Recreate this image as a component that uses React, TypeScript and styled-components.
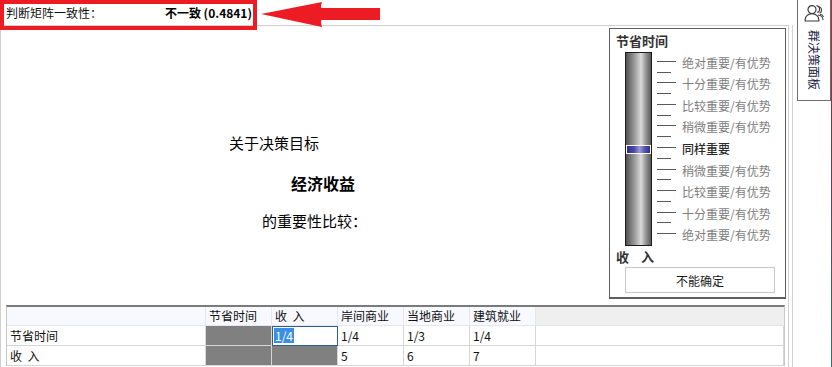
import React from "react";
import styled, { createGlobalStyle } from "styled-components";

const GlobalStyle = createGlobalStyle`
  html, body {
    margin: 0;
    padding: 0;
    background: #ffffff;
  }
  body {
    width: 832px;
    height: 367px;
    overflow: hidden;
    font-family: "Noto Sans CJK SC", "Noto Sans", sans-serif;
    color: #000;
  }
  * {
    box-sizing: border-box;
  }
`;

const scaleLabels = [
  "绝对重要/有优势",
  "十分重要/有优势",
  "比较重要/有优势",
  "稍微重要/有优势",
  "同样重要",
  "稍微重要/有优势",
  "比较重要/有优势",
  "十分重要/有优势",
  "绝对重要/有优势",
];

const columns = ["节省时间", "收  入", "岸间商业", "当地商业", "建筑就业"];

type Cell = { value?: string; blocked?: boolean; editing?: boolean };

const rows: { name: string; cells: Cell[] }[] = [
  {
    name: "节省时间",
    cells: [{ blocked: true }, { value: "1/4", editing: true }, { value: "1/4" }, { value: "1/3" }, { value: "1/4" }],
  },
  {
    name: "收  入",
    cells: [{ blocked: true }, { blocked: true }, { value: "5" }, { value: "6" }, { value: "7" }],
  },
];

const App = () => {
  return (
    <>
      <GlobalStyle />
      <Window>
        <LeftPane>
          <TopBar>
            <Status>
              <StatusLabel>判断矩阵一致性：</StatusLabel>
              <StatusValue>不一致 (0.4841)</StatusValue>
            </Status>
            <Highlight />
            <Arrow width="124" height="30" viewBox="0 0 124 30">
              <path d="M3 14 L64 2 Q62 8 64 8 L122 8 L122 20 L64 20 Q62 20 64 27 Z" fill="#ed1c24" />
            </Arrow>
          </TopBar>
          <Main>
            <Upper>
              <Prompt>
                <PromptLine $indent={228}>关于决策目标</PromptLine>
                <PromptLine $indent={290} $bold $gap={20}>
                  经济收益
                </PromptLine>
                <PromptLine $indent={261} $gap={18}>
                  的重要性比较：
                </PromptLine>
              </Prompt>
              <SliderPanel>
                <PanelTitle>节省时间</PanelTitle>
                <SliderRow>
                  <Track>
                    <Thumb style={{ top: 92 }} />
                  </Track>
                  <Scale>
                    {scaleLabels.map((label, i) => (
                      <ScaleRow key={i} $last={i === scaleLabels.length - 1}>
                        <Tick />
                        <ScaleLabel $active={i === 4}>{label}</ScaleLabel>
                      </ScaleRow>
                    ))}
                  </Scale>
                </SliderRow>
                <PanelFooter>收 入</PanelFooter>
                <UndecidedButton>不能确定</UndecidedButton>
              </SliderPanel>
            </Upper>
            <Grid>
              <HeaderCell />
              {columns.map((c) => (
                <HeaderCell key={c}>{c}</HeaderCell>
              ))}
              <HeaderFiller />
              {rows.map((r) => (
                <React.Fragment key={r.name}>
                  <DataCell>{r.name}</DataCell>
                  {r.cells.map((cell, i) =>
                    cell.editing ? (
                      <EditCell key={i}>
                        <Selected>{cell.value}</Selected>
                      </EditCell>
                    ) : (
                      <DataCell key={i} $blocked={cell.blocked}>
                        {cell.value}
                      </DataCell>
                    )
                  )}
                  <DataCell />
                </React.Fragment>
              ))}
            </Grid>
          </Main>
        </LeftPane>
        <Splitter />
        <SidePane>
          <SideTab>
            <GroupIcon width="20" height="18" viewBox="0 0 20 18">
              <path d="M12.5 1.6 a3.6 3.6 0 0 1 0.6 7" fill="none" stroke="#3a3a3a" strokeWidth="1.1" />
              <path d="M15 2.8 a3.4 3.4 0 0 1 0.6 6.4" fill="none" stroke="#3a3a3a" strokeWidth="1.1" />
              <path d="M14 11 a5.5 5 0 0 1 5 5" fill="none" stroke="#3a3a3a" strokeWidth="1.1" />
              <path d="M16 10 a5 5 0 0 1 3.5 3" fill="none" stroke="#3a3a3a" strokeWidth="1.1" />
              <circle cx="8" cy="5.6" r="4" fill="#fff" stroke="#3a3a3a" strokeWidth="1.2" />
              <path d="M1.2 17 v-1.5 a6.8 5.8 0 0 1 13.6 0 v1.5 z" fill="#fff" stroke="#3a3a3a" strokeWidth="1.2" />
            </GroupIcon>
            <TabText>群决策面板</TabText>
          </SideTab>
        </SidePane>
        <WindowEdge />
      </Window>
    </>
  );
};

const Window = styled.div`
  display: flex;
  width: 832px;
  height: 367px;
  overflow: hidden;
`;

const LeftPane = styled.div`
  width: 788px;
  display: flex;
  flex-direction: column;
`;

const TopBar = styled.div`
  position: relative;
  height: 25px;
  display: flex;
  align-items: center;
  padding-left: 6px;
`;

const Status = styled.div`
  width: 246px;
  display: flex;
  justify-content: space-between;
  align-items: center;
  font-size: 12px;
  line-height: 16px;
  margin-top: 1px;
`;

const StatusLabel = styled.span`
  color: #111;
`;

const StatusValue = styled.span`
  font-weight: 700;
  color: #000;
`;

const Highlight = styled.div`
  position: absolute;
  left: 0;
  top: 0;
  width: 257px;
  height: 30px;
  border: 4px solid #ed1c24;
  pointer-events: none;
  z-index: 2;
`;

const Arrow = styled.svg`
  position: absolute;
  left: 258px;
  top: 0;
  z-index: 2;
`;

const Main = styled.div`
  flex: 1;
  display: flex;
  flex-direction: column;
  border-top: 1px solid #cfcfcf;
  border-left: 1px solid #cfcfcf;
`;

const Upper = styled.div`
  height: 279px;
  display: flex;
`;

const Prompt = styled.div`
  flex: 1;
  display: flex;
  flex-direction: column;
  padding-top: 107px;
`;

const PromptLine = styled.div<{ $indent: number; $bold?: boolean; $gap?: number }>`
  padding-left: ${(p) => p.$indent}px;
  margin-top: ${(p) => p.$gap ?? 0}px;
  font-size: ${(p) => (p.$bold ? 16 : 15)}px;
  font-weight: ${(p) => (p.$bold ? 700 : 400)};
  line-height: 20px;
  color: #000;
  white-space: nowrap;
`;

const SliderPanel = styled.div`
  width: 177px;
  height: 271px;
  margin: 2px 2px 0 0;
  border: 1px solid #5f5f5f;
  border-bottom-width: 2px;
  padding: 4px 0 0 6px;
  display: flex;
  flex-direction: column;
`;

const PanelTitle = styled.div`
  font-size: 13px;
  font-weight: 700;
  line-height: 16px;
  color: #333;
`;

const SliderRow = styled.div`
  display: flex;
  margin-top: 3px;
`;

const Track = styled.div`
  position: relative;
  width: 27px;
  height: 194px;
  margin-left: 9px;
  border: 1px solid #1a1a1a;
  background: linear-gradient(
    to right,
    #505050 0%,
    #7c7c7c 20%,
    #b4b4b4 45%,
    #dcdcdc 60%,
    #9a9a9a 78%,
    #5a5a5a 100%
  );
`;

const Thumb = styled.div`
  position: absolute;
  left: 0;
  width: 25px;
  height: 9px;
  border: 1px solid #ffffff;
  background: linear-gradient(
    to right,
    #2c2c86 0%,
    #4848a8 30%,
    #9a9ad6 55%,
    #5a5ab4 75%,
    #2c2c86 100%
  );
`;

const Scale = styled.div`
  margin-left: 5px;
  height: 194px;
  display: grid;
  grid-template-rows: repeat(9, 1fr);
`;

const ScaleRow = styled.div<{ $last?: boolean }>`
  position: relative;
  display: flex;
  align-items: center;

  &::after {
    content: "";
    display: ${(p) => (p.$last ? "none" : "block")};
    position: absolute;
    left: 0;
    bottom: 1px;
    width: 14px;
    height: 1px;
    background: #5a5a5a;
  }
`;

const Tick = styled.span`
  width: 19px;
  height: 1px;
  background: #5a5a5a;
  margin-top: -3px;
`;

const ScaleLabel = styled.span<{ $active?: boolean }>`
  margin-left: 6px;
  font-size: 12px;
  line-height: 16px;
  white-space: nowrap;
  color: ${(p) => (p.$active ? "#2b2b2b" : "#7e7e7e")};
  font-weight: ${(p) => (p.$active ? 500 : 400)};
`;

const PanelFooter = styled.div`
  margin-top: 3px;
  font-size: 13px;
  font-weight: 700;
  line-height: 16px;
  color: #333;
  word-spacing: 9px;
`;

const UndecidedButton = styled.button`
  margin: 2px 0 0 9px;
  width: 150px;
  height: 26px;
  border: 1px solid #c6c6c6;
  background: #ffffff;
  font-family: inherit;
  font-size: 12px;
  color: #1a1a1a;
  padding: 0;
`;

const Grid = styled.div`
  margin-left: 5px;
  width: 779px;
  display: grid;
  grid-template-columns: 199px repeat(5, 66px) 1fr;
  grid-template-rows: 19px 20px 20px;
  border-top: 2px solid #7b7b7b;
  border-left: 1px solid #c8c8c8;
  border-right: 1px solid #c8c8c8;
  font-size: 12px;
`;

const HeaderCell = styled.div`
  background: #f8f9ff;
  border-right: 1px solid #e4e7f2;
  border-bottom: 1px solid #e4e7f2;
  padding-left: 3px;
  line-height: 18px;
  white-space: pre;
  color: #111;
`;

const HeaderFiller = styled.div`
  background: #efefef;
  border-bottom: 1px solid #e4e4e4;
`;

const DataCell = styled.div<{ $blocked?: boolean }>`
  background: ${(p) => (p.$blocked ? "#808080" : "#ffffff")};
  border-right: 1px solid #d6d6d6;
  border-bottom: 1px solid #d6d6d6;
  padding-left: 3px;
  line-height: 19px;
  white-space: pre;
  color: #111;
`;

const EditCell = styled.div`
  border: 1px solid #2f5f8c;
  border-bottom-width: 1px;
  padding: 1px 0 0 1px;
  display: flex;
  align-items: flex-start;
  background: #ffffff;
`;

const Selected = styled.span`
  background: #3a8ee6;
  color: #ffffff;
  line-height: 15px;
  padding: 0 1px;
`;

const Splitter = styled.div`
  width: 5px;
  margin-top: 25px;
  border-left: 1px solid #d2d2d2;
  border-right: 1px solid #d2d2d2;
`;

const SidePane = styled.div`
  width: 38px;
  background: #ffffff;
`;

const SideTab = styled.div`
  margin-left: 4px;
  width: 34px;
  height: 101px;
  border: 1px solid #6e6e6e;
  border-top: none;
  display: flex;
  flex-direction: column;
  align-items: center;
  padding-top: 4px;
`;

const GroupIcon = styled.svg`
  display: block;
`;

const TabText = styled.div`
  margin-top: 8px;
  writing-mode: vertical-rl;
  text-orientation: sideways;
  font-size: 12px;
  line-height: 14px;
  color: #1c1c44;
`;

const WindowEdge = styled.div`
  width: 1px;
  background: linear-gradient(#b3323c, #6a3a50 40%, #2d6a84);
`;

export default App;
